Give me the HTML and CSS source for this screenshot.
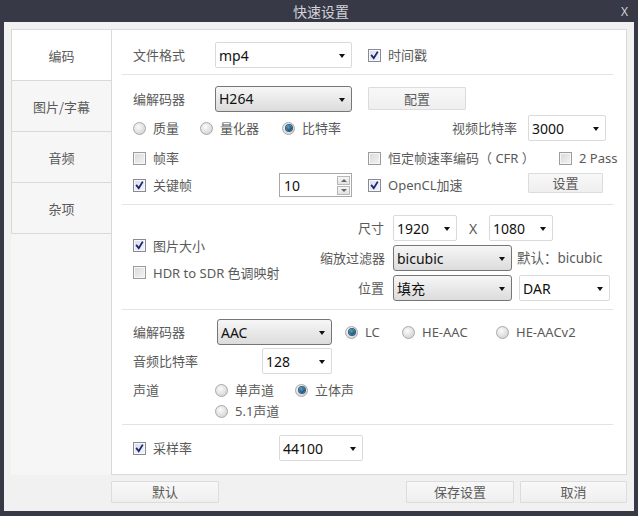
FILE: index.html
```html
<!DOCTYPE html>
<html lang="zh-CN">
<head>
<meta charset="utf-8">
<title>快速设置</title>
<link rel="stylesheet" href="styles.css">
</head>
<body>
<div class="window">
  <div class="titlebar"><span class="title">快速设置</span><span class="close">X</span></div>
  <div class="client">
    <div class="top">
      <nav class="nav">
        <div class="tab active">编码</div>
        <div class="tab">图片/字幕</div>
        <div class="tab">音频</div>
        <div class="tab">杂项</div>
      </nav>
      <main class="panel">
        <section class="sec s1">
          <div class="row h26">
            <span class="lbl w82">文件格式</span>
            <div class="combo w137">mp4<i class="arr"></i></div>
            <label class="chk ml16"><span class="box on"><svg viewBox="0 0 13 13"><path d="M3.2 6.6 L5.6 9.6 L9.8 2.8"/></svg></span>时间戳</label>
          </div>
        </section>

        <section class="sec s2">
          <div class="row h27">
            <span class="lbl w82">编解码器</span>
            <div class="combo btn-style w137">H264<i class="arr"></i></div>
            <button class="btn cfg ml16">配置</button>
          </div>
          <div class="row h26 mt3">
            <label class="rad w67"><span class="dot"></span>质量</label>
            <label class="rad w82c"><span class="dot"></span>量化器</label>
            <label class="rad w130"><span class="dot on"></span>比特率</label>
            <span class="lbl rlbl w105">视频比特率</span>
            <div class="combo w78 ml11">3000<i class="arr"></i></div>
          </div>
          <div class="row h20 mt7">
            <label class="chk w235"><span class="box"></span>帧率</label>
            <label class="chk w191"><span class="box"></span>恒定帧速率编码（ CFR ）</label>
            <label class="chk"><span class="box"></span>2 Pass</label>
          </div>
          <div class="row h24 mt5">
            <label class="chk w146"><span class="box on"><svg viewBox="0 0 13 13"><path d="M3.2 6.6 L5.6 9.6 L9.8 2.8"/></svg></span>关键帧</label>
            <div class="spin">
              <span class="spin-val">10</span>
              <span class="spin-btns"><span class="sb up"></span><span class="sb down"></span></span>
            </div>
            <label class="chk w160 ml16"><span class="box on"><svg viewBox="0 0 13 13"><path d="M3.2 6.6 L5.6 9.6 L9.8 2.8"/></svg></span>OpenCL加速</label>
            <button class="btn setbtn">设置</button>
          </div>
        </section>

        <section class="sec s3">
          <div class="pic-left">
            <label class="chk h27"><span class="box on"><svg viewBox="0 0 13 13"><path d="M3.2 6.6 L5.6 9.6 L9.8 2.8"/></svg></span>图片大小</label>
            <label class="chk h27"><span class="box"></span>HDR to SDR 色调映射</label>
          </div>
          <div class="pic-grid">
            <span class="lbl rlbl">尺寸</span>
            <div class="ctl">
              <div class="combo w64">1920<i class="arr"></i></div>
              <span class="xsep">X</span>
              <div class="combo w64">1080<i class="arr"></i></div>
            </div>
            <span class="lbl rlbl">缩放过滤器</span>
            <div class="ctl">
              <div class="combo btn-style w119">bicubic<i class="arr"></i></div>
              <span class="lbl note">默认：bicubic</span>
            </div>
            <span class="lbl rlbl">位置</span>
            <div class="ctl">
              <div class="combo btn-style w119">填充<i class="arr"></i></div>
              <div class="combo w91 ml7">DAR<i class="arr"></i></div>
            </div>
          </div>
        </section>

        <section class="sec s4">
          <div class="row h26">
            <span class="lbl w84">编解码器</span>
            <div class="combo btn-style w115">AAC<i class="arr"></i></div>
            <label class="rad w57 ml13"><span class="dot on"></span>LC</label>
            <label class="rad w94"><span class="dot"></span>HE-AAC</label>
            <label class="rad"><span class="dot"></span>HE-AACv2</label>
          </div>
          <div class="row h26 mt3">
            <span class="lbl w129">音频比特率</span>
            <div class="combo w70">128<i class="arr"></i></div>
          </div>
          <div class="row h20 mt6">
            <span class="lbl w82">声道</span>
            <label class="rad w80"><span class="dot"></span>单声道</label>
            <label class="rad"><span class="dot on"></span>立体声</label>
          </div>
          <div class="row h20 mt1 pl82">
            <label class="rad"><span class="dot"></span>5.1声道</label>
          </div>
        </section>

        <section class="sec s5">
          <div class="row h26">
            <label class="chk w146"><span class="box on"><svg viewBox="0 0 13 13"><path d="M3.2 6.6 L5.6 9.6 L9.8 2.8"/></svg></span>采样率</label>
            <div class="combo w84">44100<i class="arr"></i></div>
          </div>
        </section>
      </main>
    </div>
    <div class="footer">
      <button class="btn fbtn">默认</button>
      <span class="spacer"></span>
      <button class="btn fbtn">保存设置</button>
      <button class="btn fbtn last">取消</button>
    </div>
  </div>
</div>
</body>
</html>
```

FILE: styles.css
```css
* { box-sizing: border-box; }
html, body { margin: 0; padding: 0; }
body {
  width: 638px;
  height: 516px;
  background: #373947;
  font-family: "Noto Sans", "Noto Sans CJK SC", sans-serif;
  font-size: 13px;
  color: #5a5a5a;
  overflow: hidden;
}
.window { width: 638px; height: 516px; display: flex; flex-direction: column; }
.titlebar {
  height: 22px;
  display: flex;
  align-items: center;
  justify-content: center;
  position: relative;
  color: #d2d3d8;
  font-family: "Noto Sans CJK SC", sans-serif;
  font-size: 14px;
}
.title { margin-left: 4px; }
.close {
  position: absolute;
  right: 10px;
  top: 3px;
  font-family: "Noto Sans", sans-serif;
  font-size: 12px;
  color: #cfd0d6;
}
.client {
  margin: 0 4px 0 4px;
  height: 489px;
  background: #f1f1f1;
  padding: 7px 7px 0 7px;
  display: flex;
  flex-direction: column;
}
.top { display: flex; height: 446px; }
.nav { width: 100px; background: #f6f6f6; display: flex; flex-direction: column; }
.tab {
  height: 52px;
  border: 1px solid #d9d9d9;
  border-right: none;
  margin-top: -1px;
  display: flex;
  align-items: center;
  justify-content: center;
  background: #f6f6f6;
  color: #5a5a5a;
  font-family: "Noto Sans CJK SC", sans-serif;
  font-size: 13px;
}
.tab:first-child { margin-top: 0; }
.tab.active { background: #fff; }
.panel {
  width: 516px;
  background: #fff;
  border: 1px solid #d9d9d9;
  display: flex;
  flex-direction: column;
}
.sec {
  margin: 0 13px 0 10px;
  padding-left: 11px;
  border-bottom: 1px solid #e3e3e3;
}
.s1 { height: 45px; padding-top: 12px; }
.s2 { height: 130px; padding-top: 10px; }
.s3 { height: 105px; padding-top: 10px; display: flex; }
.s4 { height: 115px; padding-top: 9px; }
.s5 { flex: 1; border-bottom: none; padding-top: 10px; }

.row { display: flex; align-items: center; }
.h20 { height: 20px; }
.h24 { height: 24px; }
.h26 { height: 26px; }
.h27 { height: 27px; }
.mt1 { margin-top: 1px; }
.mt3 { margin-top: 3px; }
.mt5 { margin-top: 5px; }
.mt6 { margin-top: 6px; }
.mt7 { margin-top: 7px; }
.ml7 { margin-left: 7px; }
.ml11 { margin-left: 11px; }
.ml13 { margin-left: 13px; }
.ml16 { margin-left: 16px; }
.pl82 { padding-left: 82px; }

.w57 { width: 57px; flex: none; }
.w64 { width: 64px; flex: none; }
.w67 { width: 67px; flex: none; }
.w70 { width: 70px; flex: none; }
.w78 { width: 78px; flex: none; }
.w80 { width: 80px; flex: none; }
.w82 { width: 82px; flex: none; }
.w82c { width: 82px; flex: none; }
.w84 { width: 84px; flex: none; }
.w91 { width: 91px; flex: none; }
.w94 { width: 94px; flex: none; }
.w105 { width: 105px; flex: none; }
.w115 { width: 115px; flex: none; }
.w119 { width: 119px; flex: none; }
.w129 { width: 129px; flex: none; }
.w130 { width: 130px; flex: none; }
.w137 { width: 137px; flex: none; }
.w146 { width: 146px; flex: none; }
.w160 { width: 160px; flex: none; }
.w191 { width: 191px; flex: none; }
.w235 { width: 235px; flex: none; }

.lbl { color: #5a5a5a; white-space: nowrap; line-height: 18px; }
.rlbl { text-align: right; }

.combo {
  height: 26px;
  border: 1px solid #dadada;
  border-radius: 2px;
  background: #fff;
  display: flex;
  align-items: center;
  justify-content: space-between;
  padding: 0 6px 0 3px;
  color: #111;
  font-size: 14px;
  font-family: "Noto Sans", "Noto Sans CJK SC", sans-serif;
}
.combo.btn-style {
  border: 1px solid #767676;
  border-radius: 3px;
  background: linear-gradient(#f7f7f7, #e9e9e9 50%, #dcdcdc);
}
.arr {
  width: 0;
  height: 0;
  border-left: 3.5px solid transparent;
  border-right: 3.5px solid transparent;
  border-top: 4px solid #111;
  margin-top: 2px;
}

.btn {
  font-family: "Noto Sans CJK SC", sans-serif;
  font-size: 13px;
  color: #5a5a5a;
  background: linear-gradient(#f8f8f8, #efefef);
  border: 1px solid #dcdcdc;
  border-radius: 1px;
  padding: 0;
  line-height: 18px;
}
.cfg { width: 98px; height: 23px; }
.setbtn { width: 75px; height: 20px; margin-top: -4px; }

.chk, .rad {
  display: flex;
  align-items: center;
  color: #5a5a5a;
  white-space: nowrap;
  line-height: 18px;
}
.box {
  width: 13px;
  height: 13px;
  flex: none;
  margin-right: 7px;
  border: 1px solid #9c9c9c;
  background: linear-gradient(135deg, #d9d9d9, #f4f4f4);
  box-shadow: inset 0 0 0 1px #f7f7f7;
  display: flex;
}
.box.on {
  background: linear-gradient(135deg, #d8dcf0, #f3f4fb);
  border-color: #8a8a96;
}
.box svg { width: 11px; height: 11px; }
.box svg path {
  fill: none;
  stroke: #1c2566;
  stroke-width: 2.1;
  stroke-linecap: square;
  stroke-linejoin: miter;
}
.dot {
  width: 13px;
  height: 13px;
  flex: none;
  margin-right: 7px;
  border-radius: 50%;
  border: 1px solid #a9a9a9;
  background: radial-gradient(circle at 40% 35%, #fbfbfb, #dedede 60%, #c9c9c9);
  display: flex;
  align-items: center;
  justify-content: center;
}
.dot.on::after {
  content: "";
  width: 6px;
  height: 6px;
  border-radius: 50%;
  background: radial-gradient(circle at 40% 35%, #5aa0c6, #1a4d70 70%);
  box-shadow: 0 0 0 1px #2f5e80;
}

.spin {
  width: 73px;
  height: 24px;
  border: 1px solid #a8a8a8;
  display: flex;
  align-items: center;
  justify-content: space-between;
  padding: 0 1px 0 4px;
  color: #111;
  font-size: 14px;
}
.spin-btns { display: flex; flex-direction: column; gap: 1px; }
.sb {
  width: 13px;
  height: 9px;
  border: 1px solid #b8b8b8;
  background: linear-gradient(#f6f6f6, #e2e2e2);
  display: flex;
  align-items: center;
  justify-content: center;
}
.sb::after {
  content: "";
  width: 0;
  height: 0;
  border-left: 3px solid transparent;
  border-right: 3px solid transparent;
}
.sb.up::after { border-bottom: 3px solid #666; }
.sb.down::after { border-top: 3px solid #666; }

.pic-left {
  width: 187px;
  flex: none;
  padding-top: 17px;
  display: flex;
  flex-direction: column;
}
.pic-grid {
  display: grid;
  grid-template-columns: 64px auto;
  grid-auto-rows: 26px;
  column-gap: 9px;
  row-gap: 4px;
  align-items: center;
}
.ctl { display: flex; align-items: center; }
.xsep {
  width: 32px;
  text-align: center;
  color: #5a5a5a;
  font-size: 14px;
}
.note { margin-left: 5px; font-size: 13.5px; }

.footer {
  display: flex;
  margin-top: 6px;
  height: 22px;
}
.fbtn { width: 108px; height: 22px; }
.footer .fbtn:first-child { margin-left: 100px; }
.spacer { flex: 1; }
.last { margin-left: 6px; width: 107px; }
```
